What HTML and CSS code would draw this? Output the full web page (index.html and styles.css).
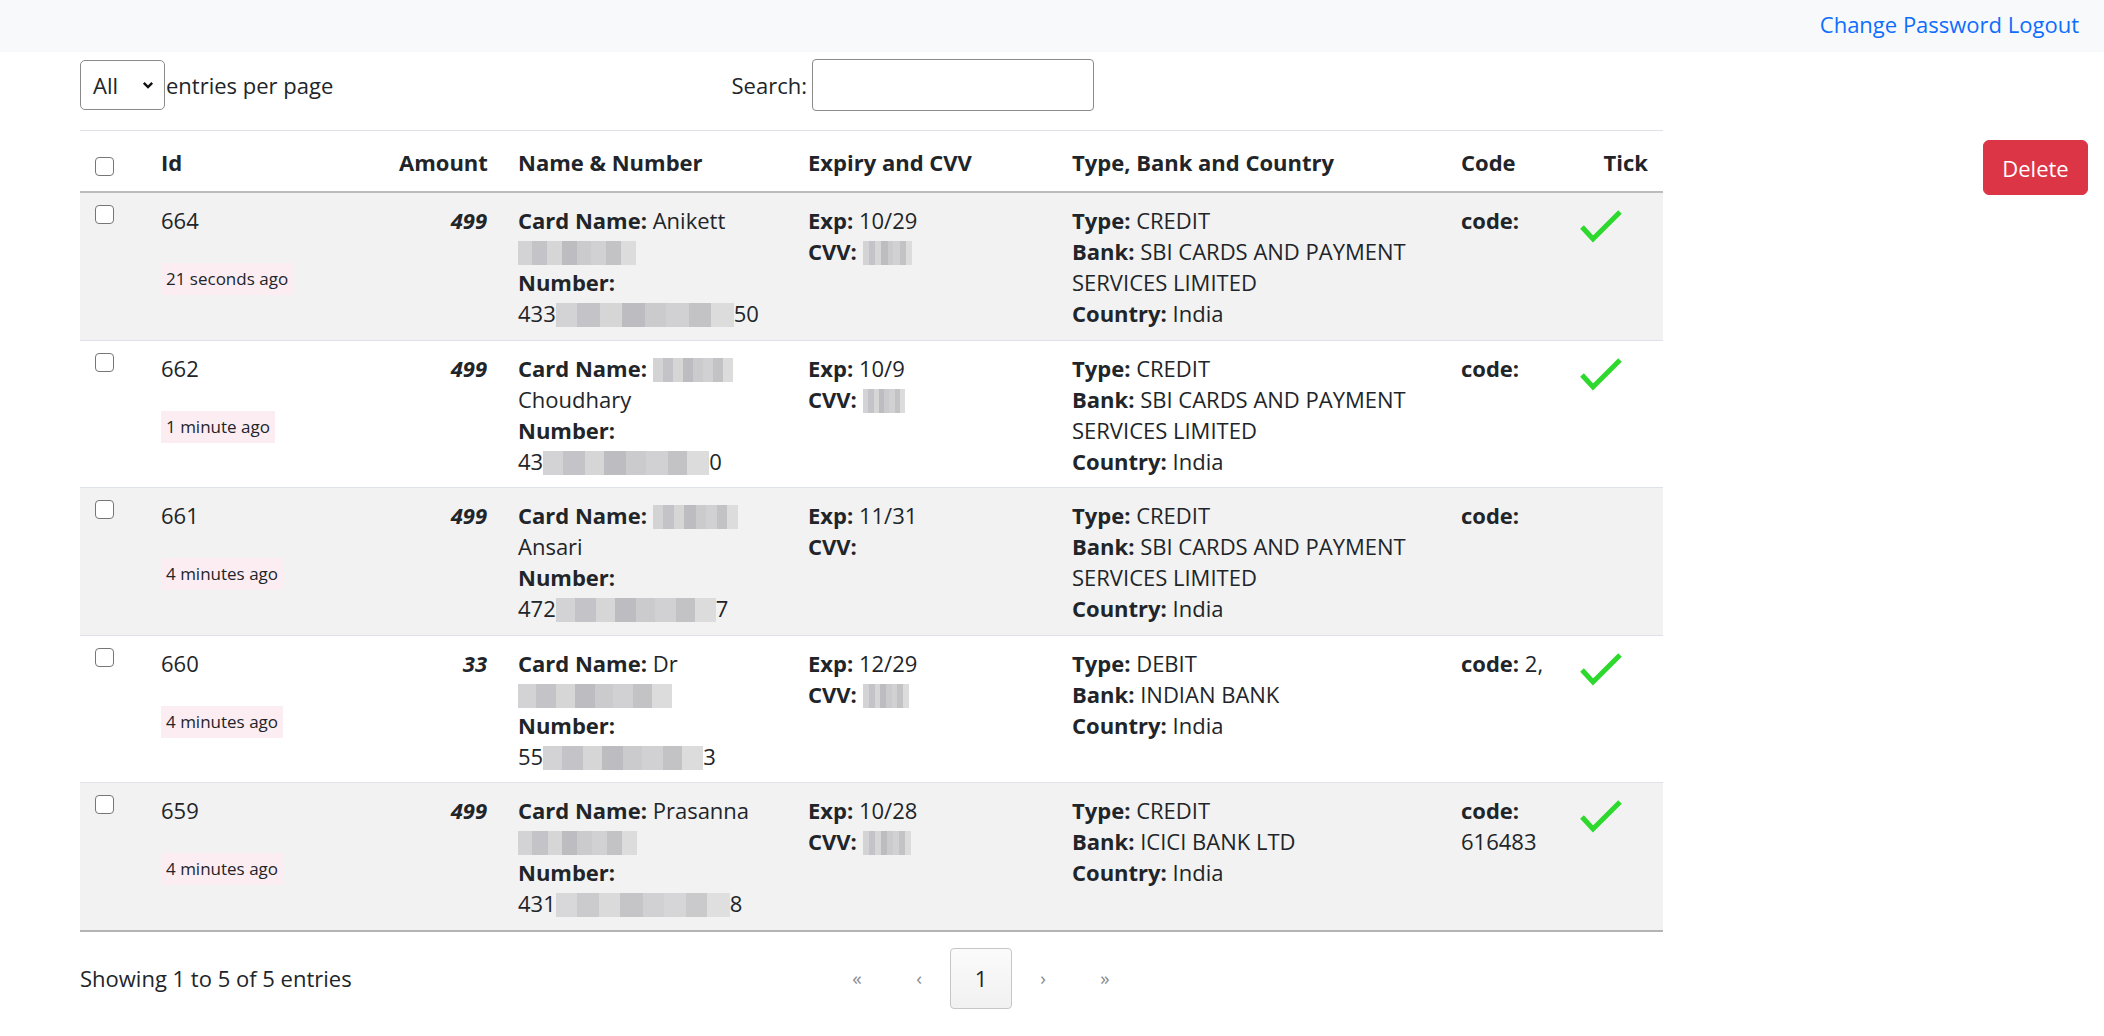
FILE: index.html
```html
<!DOCTYPE html>
<html lang="en">
<head>
<meta charset="utf-8">
<title>Cards</title>
<link rel="stylesheet" href="styles.css">
</head>
<body>
<nav class="topbar">
  <div class="nav-links"><a href="#" class="nav-link">Change Password</a> <a href="#" class="nav-link">Logout</a></div>
</nav>
<main class="page">
  <section class="table-area">
    <div class="dt-top">
      <div class="dt-dropdown">
        <div class="fake-select"><span>All</span>
          <svg class="chev" width="12" height="8" viewBox="0 0 12 8"><path d="M1.8 1.8 L6 6 L10.2 1.8" fill="none" stroke="#111" stroke-width="2.4"/></svg>
        </div>
        <span class="dd-label">entries per page</span>
      </div>
      <div class="dt-search">
        <label class="search-label">Search:</label>
        <div class="search-input"></div>
      </div>
    </div>

    <table class="cards">
      <colgroup>
        <col class="c1"><col class="c2"><col class="c3"><col class="c4"><col class="c5"><col class="c6"><col class="c7"><col class="c8">
      </colgroup>
      <thead>
        <tr>
          <th class="cb-cell"><span class="cb cb-head"></span></th>
          <th>Id</th>
          <th class="amt">Amount</th>
          <th>Name &amp; Number</th>
          <th>Expiry and CVV</th>
          <th>Type, Bank and Country</th>
          <th>Code</th>
          <th class="tick-head">Tick</th>
        </tr>
      </thead>
      <tbody>
        <tr class="odd">
          <td class="cb-cell"><span class="cb"></span></td>
          <td><div>664</div><div class="ago-wrap"><span class="ago">21 seconds ago</span></div></td>
          <td class="amt"><b><i>499</i></b></td>
          <td><b>Card Name:</b> Anikett<br><span class="blur" style="width:118px"></span><br><b>Number:</b><br>433<span class="blur" style="width:178px"></span>50</td>
          <td><b>Exp:</b> 10/29<br><b>CVV:</b> <span class="blur" style="width:49px"></span></td>
          <td><b>Type:</b> CREDIT<br><b>Bank:</b> SBI CARDS AND PAYMENT<br>SERVICES LIMITED<br><b>Country:</b> India</td>
          <td><b>code:</b></td>
          <td class="tick-cell"><svg class="tick" width="44" height="36" viewBox="0 0 44 36"><polyline points="2,19 13,31 40,4" fill="none" stroke="#2cd92c" stroke-width="5" stroke-linejoin="miter"/></svg></td>
        </tr>
        <tr>
          <td class="cb-cell"><span class="cb"></span></td>
          <td><div>662</div><div class="ago-wrap"><span class="ago">1 minute ago</span></div></td>
          <td class="amt"><b><i>499</i></b></td>
          <td><b>Card Name:</b> <span class="blur" style="width:80px"></span><br>Choudhary<br><b>Number:</b><br>43<span class="blur" style="width:166px"></span>0</td>
          <td><b>Exp:</b> 10/9<br><b>CVV:</b> <span class="blur" style="width:42px"></span></td>
          <td><b>Type:</b> CREDIT<br><b>Bank:</b> SBI CARDS AND PAYMENT<br>SERVICES LIMITED<br><b>Country:</b> India</td>
          <td><b>code:</b></td>
          <td class="tick-cell"><svg class="tick" width="44" height="36" viewBox="0 0 44 36"><polyline points="2,19 13,31 40,4" fill="none" stroke="#2cd92c" stroke-width="5" stroke-linejoin="miter"/></svg></td>
        </tr>
        <tr class="odd">
          <td class="cb-cell"><span class="cb"></span></td>
          <td><div>661</div><div class="ago-wrap"><span class="ago">4 minutes ago</span></div></td>
          <td class="amt"><b><i>499</i></b></td>
          <td><b>Card Name:</b> <span class="blur" style="width:85px"></span><br>Ansari<br><b>Number:</b><br>472<span class="blur" style="width:160px"></span>7</td>
          <td><b>Exp:</b> 11/31<br><b>CVV:</b></td>
          <td><b>Type:</b> CREDIT<br><b>Bank:</b> SBI CARDS AND PAYMENT<br>SERVICES LIMITED<br><b>Country:</b> India</td>
          <td><b>code:</b></td>
          <td class="tick-cell"></td>
        </tr>
        <tr>
          <td class="cb-cell"><span class="cb"></span></td>
          <td><div>660</div><div class="ago-wrap"><span class="ago">4 minutes ago</span></div></td>
          <td class="amt"><b><i>33</i></b></td>
          <td><b>Card Name:</b> Dr<br><span class="blur" style="width:154px"></span><br><b>Number:</b><br>55<span class="blur" style="width:160px"></span>3</td>
          <td><b>Exp:</b> 12/29<br><b>CVV:</b> <span class="blur" style="width:46px"></span></td>
          <td><b>Type:</b> DEBIT<br><b>Bank:</b> INDIAN BANK<br><b>Country:</b> India</td>
          <td><b>code:</b> 2,</td>
          <td class="tick-cell"><svg class="tick" width="44" height="36" viewBox="0 0 44 36"><polyline points="2,19 13,31 40,4" fill="none" stroke="#2cd92c" stroke-width="5" stroke-linejoin="miter"/></svg></td>
        </tr>
        <tr class="odd last">
          <td class="cb-cell"><span class="cb"></span></td>
          <td><div>659</div><div class="ago-wrap"><span class="ago">4 minutes ago</span></div></td>
          <td class="amt"><b><i>499</i></b></td>
          <td><b>Card Name:</b> Prasanna<br><span class="blur" style="width:119px"></span><br><b>Number:</b><br>431<span class="blur light" style="width:174px"></span>8</td>
          <td><b>Exp:</b> 10/28<br><b>CVV:</b> <span class="blur" style="width:48px"></span></td>
          <td><b>Type:</b> CREDIT<br><b>Bank:</b> ICICI BANK LTD<br><b>Country:</b> India</td>
          <td><b>code:</b><br>616483</td>
          <td class="tick-cell"><svg class="tick" width="44" height="36" viewBox="0 0 44 36"><polyline points="2,19 13,31 40,4" fill="none" stroke="#2cd92c" stroke-width="5" stroke-linejoin="miter"/></svg></td>
        </tr>
      </tbody>
    </table>

    <div class="dt-bottom">
      <div class="dt-info">Showing 1 to 5 of 5 entries</div>
      <nav class="pager">
        <span class="pg">&laquo;</span>
        <span class="pg">&lsaquo;</span>
        <span class="pg active">1</span>
        <span class="pg">&rsaquo;</span>
        <span class="pg">&raquo;</span>
      </nav>
    </div>
  </section>
  <aside class="side">
    <button class="btn-delete">Delete</button>
  </aside>
</main>
</body>
</html>
```

FILE: styles.css
```css
* { box-sizing: border-box; }

body {
  margin: 0;
  font-family: "Open Sans", "Noto Sans", sans-serif;
  font-size: 22px;
  line-height: 31px;
  color: #212529;
  background: #fff;
}

.topbar {
  height: 52px;
  background: #f8f9fa;
  display: flex;
  justify-content: flex-end;
  align-items: center;
  padding: 0 25px 4px 0;
}

.nav-link {
  color: #0d6efd;
  text-decoration: none;
}

.page {
  display: flex;
  padding-left: 80px;
}

.table-area {
  width: 1583px;
  flex: none;
}

.side {
  flex: 1;
  display: flex;
  justify-content: flex-end;
  align-items: flex-start;
  padding: 88px 16px 0 0;
}

.btn-delete {
  width: 105px;
  height: 55px;
  background: #dc3545;
  color: #fff;
  border: 1px solid #dc3545;
  border-radius: 6px;
  font-family: inherit;
  font-size: 22px;
  padding: 0;
}

/* top controls */
.dt-top {
  width: 1014px;
  height: 78px;
  display: flex;
  justify-content: space-between;
  align-items: flex-start;
  padding-top: 7px;
}

.dt-dropdown {
  display: flex;
  align-items: center;
  height: 52px;
}

.fake-select {
  width: 85px;
  height: 50px;
  border: 1px solid #8a8a8a;
  border-radius: 5px;
  display: flex;
  align-items: center;
  justify-content: space-between;
  padding: 0 10px 0 12px;
  background: #fff;
}

.dd-label {
  margin-left: 1px;
}

.dt-search {
  display: flex;
  align-items: center;
  gap: 5px;
}

.search-input {
  width: 282px;
  height: 52px;
  border: 1px solid #8a8a8a;
  border-radius: 4px;
  background: #fff;
}

/* table */
.cards {
  width: 1583px;
  table-layout: fixed;
  border-collapse: collapse;
}

.c1 { width: 70px; }
.c2 { width: 238px; }
.c3 { width: 119px; }
.c4 { width: 290px; }
.c5 { width: 264px; }
.c6 { width: 389px; }
.c7 { width: 119px; }
.c8 { width: 94px; }

.cards th,
.cards td {
  padding: 12px 11px 10.5px;
  vertical-align: top;
  text-align: left;
}

.cards thead th {
  font-weight: 700;
  padding: 16px 11px 13px;
  border-top: 1px solid #dee2e6;
  border-bottom: 2px solid #bcbcbc;
}

.cards tbody tr {
  border-bottom: 1px solid #dee2e6;
}

.cards tbody tr.last {
  border-bottom: 2px solid #b4b4b4;
}

.cards tbody tr.odd {
  background: #f2f2f2;
}

.cards .amt {
  text-align: right;
  padding-right: 20px;
}

.cards .cb-cell {
  padding-left: 15px;
}

.cb {
  display: block;
  width: 19px;
  height: 19px;
  border: 1.5px solid #767676;
  border-radius: 4px;
  background: #fff;
  margin-top: 0;
}

.cb-head {
  margin-top: 10px;
}

.cards th.tick-head {
  text-align: right;
  padding-right: 15px;
}

.tick {
  display: block;
  margin-top: 3px;
}

.ago-wrap {
  margin-top: 24px;
  line-height: 32px;
}

.ago {
  display: inline-block;
  height: 32px;
  padding: 0 5px;
  background: #fcedf3;
  font-size: 17px;
  line-height: 32px;
}

.blur {
  display: inline-block;
  height: 24px;
  vertical-align: -5px;
  background: linear-gradient(90deg,
    #d3d3d5 0 12%, #c4c4c8 12% 25%, #d6d6d6 25% 37%, #bdbdc1 37% 50%,
    #cbcbcd 50% 62%, #d1d1d3 62% 75%, #c3c3c5 75% 87%, #dcdcdc 87% 100%);
}

.blur.light {
  opacity: 0.85;
}

/* bottom */
.dt-bottom {
  display: flex;
  align-items: center;
  padding-top: 16px;
}

.dt-info {
  width: 746px;
}

.pager {
  display: flex;
}

.pg {
  width: 62px;
  height: 61px;
  display: flex;
  align-items: center;
  justify-content: center;
  color: #8c8c8c;
  font-size: 19px;
}

.pg.active {
  border: 1px solid #c6c6c6;
  border-radius: 4px;
  background: linear-gradient(#fbfbfb, #f1f1f1);
  color: #212529;
  font-size: 22px;
}
```
